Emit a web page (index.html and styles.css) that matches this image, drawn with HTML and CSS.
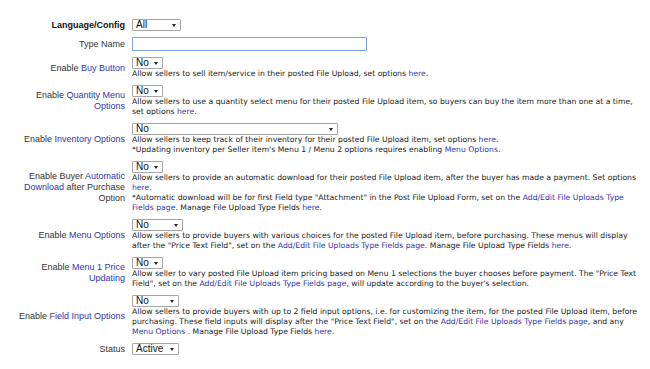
FILE: index.html
```html
<!DOCTYPE html>
<html lang="en">
<head>
    <meta charset="UTF-8">
    <title>File Upload Type Settings</title>
    <link rel="stylesheet" href="styles.css">
</head>
<body>
    <form class="settings">
        <div class="field-label strong">Language/Config</div>
        <div class="field-control">
            <span class="select w-48"><select><option>All</option></select></span>
        </div>

        <div class="field-label">Type Name</div>
        <div class="field-control">
            <input type="text" class="text-input">
        </div>

        <div class="field-label">Enable <a href="#">Buy Button</a></div>
        <div class="field-control">
            <span class="select w-31"><select><option>No</option></select></span>
            <p class="help">Allow sellers to sell item/service in their posted File Upload, set options <a href="#">here</a>.</p>
        </div>

        <div class="field-label">Enable <a href="#">Quantity Menu Options</a></div>
        <div class="field-control">
            <span class="select w-31"><select><option>No</option></select></span>
            <p class="help">Allow sellers to use a quantity select menu for their posted File Upload item, so buyers can buy the item more than one at a time, set options <a href="#">here</a>.</p>
        </div>

        <div class="field-label">Enable <a href="#">Inventory Options</a></div>
        <div class="field-control">
            <span class="select w-206"><select><option>No</option></select></span>
            <p class="help">Allow sellers to keep track of their inventory for their posted File Upload item, set options <a href="#">here</a>.<br>*Updating inventory per Seller item's Menu 1 / Menu 2 options requires enabling <a href="#">Menu Options</a>.</p>
        </div>

        <div class="field-label">Enable Buyer <a href="#">Automatic Download</a> after Purchase Option</div>
        <div class="field-control">
            <span class="select w-31"><select><option>No</option></select></span>
            <p class="help">Allow sellers to provide an automatic download for their posted File Upload item, after the buyer has made a payment. Set options <a href="#">here</a>.<br>*Automatic download will be for first Field type "Attachment" in the Post File Upload Form, set on the <a href="#">Add/Edit File Uploads Type Fields page</a>. Manage File Upload Type Fields <a href="#">here</a>.</p>
        </div>

        <div class="field-label">Enable <a href="#">Menu Options</a></div>
        <div class="field-control">
            <span class="select w-51"><select><option>No</option></select></span>
            <p class="help">Allow sellers to provide buyers with various choices for the posted File Upload item, before purchasing. These menus will display after the "Price Text Field", set on the <a href="#">Add/Edit File Uploads Type Fields page</a>. Manage File Upload Type Fields <a href="#">here</a>.</p>
        </div>

        <div class="field-label">Enable <a href="#">Menu 1 Price Updating</a></div>
        <div class="field-control">
            <span class="select w-31"><select><option>No</option></select></span>
            <p class="help">Allow seller to vary posted File Upload item pricing based on Menu 1 selections the buyer chooses before payment. The "Price Text Field", set on the <a href="#">Add/Edit File Uploads Type Fields page</a>, will update according to the buyer's selection.</p>
        </div>

        <div class="field-label">Enable <a href="#">Field Input Options</a></div>
        <div class="field-control">
            <span class="select w-47"><select><option>No</option></select></span>
            <p class="help">Allow sellers to provide buyers with up to 2 field input options, i.e. for customizing the item, for the posted File Upload item, before purchasing. These field inputs will display after the "Price Text Field", set on the <a href="#">Add/Edit File Uploads Type Fields page</a>, and any <a href="#">Menu Options</a> . Manage File Upload Type Fields <a href="#">here</a>.</p>
        </div>

        <div class="field-label">Status</div>
        <div class="field-control">
            <span class="select w-47"><select><option>Active</option></select></span>
        </div>
    </form>
</body>
</html>
```

FILE: styles.css
```css
:root {
    --text-color: #333333;
    --link-color: #3535a8;
    --border-color: #a6a6a6;
    --focus-color: #7fa2e2;
}

* {
    margin: 0;
    padding: 0;
    box-sizing: border-box;
}

body {
    margin: 8px;
    background-color: white;
    color: var(--text-color);
    font-family: "Liberation Sans", Arial, sans-serif;
}

a {
    color: var(--link-color);
    text-decoration: none;
}

.settings {
    display: grid;
    grid-template-columns: 117px 1fr;
    column-gap: 7px;
    row-gap: 6px;
    padding-top: 11px;
}

.field-label {
    align-self: center;
    text-align: right;
    font-size: 9px;
    line-height: 11px;
}

.field-label.strong {
    font-weight: 700;
    color: #111;
}

.field-control {
    display: flex;
    flex-direction: column;
    align-items: flex-start;
}

.select {
    position: relative;
    display: inline-block;
}

.select select {
    appearance: none;
    -webkit-appearance: none;
    display: block;
    width: 100%;
    height: 12px;
    padding: 0 0 0 3px;
    border: 1px solid var(--border-color);
    border-radius: 1px;
    background-color: white;
    color: #111;
    font-family: "Liberation Sans", Arial, sans-serif;
    font-size: 10px;
    line-height: 10px;
}

.select::after {
    content: '';
    position: absolute;
    top: 5px;
    right: 5px;
    border-left: 2px solid transparent;
    border-right: 2px solid transparent;
    border-top: 3px solid #222;
}

.w-31 { width: 31px; }
.w-47 { width: 47px; }
.w-48 { width: 49px; }
.w-51 { width: 51px; }
.w-206 { width: 206px; }

.text-input {
    width: 235px;
    height: 14px;
    border: 1px solid var(--focus-color);
    background-color: white;
    outline: none;
}

.help {
    font-family: "DejaVu Sans", Verdana, sans-serif;
    font-size: 7.7px;
    line-height: 10px;
    color: #222;
}
```
